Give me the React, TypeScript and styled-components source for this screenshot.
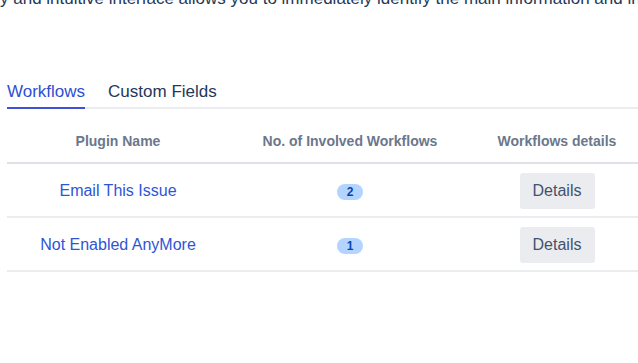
import React, { useState } from 'react';
import styled, { createGlobalStyle } from 'styled-components';

const GlobalStyle = createGlobalStyle`
  html, body {
    margin: 0;
    padding: 0;
    background: #ffffff;
    overflow: hidden;
  }
  body {
    font-family: 'Liberation Sans', Arial, sans-serif;
    color: #172b4d;
  }
`;

const Intro = styled.p`
  margin: -11px 0 0 0;
  font-size: 17px;
  line-height: 20px;
  color: #253858;
  white-space: nowrap;
  overflow: hidden;
`;

const Section = styled.div`
  padding: 69px 0 0 7px;
`;

const TabList = styled.div`
  display: flex;
  gap: 23px;
  border-bottom: 2px solid #ebecf0;
`;

const Tab = styled.button<{ active?: boolean }>`
  position: relative;
  border: 0;
  background: none;
  padding: 4px 0 5px;
  font-family: inherit;
  font-size: 17px;
  line-height: 20px;
  color: ${(p) => (p.active ? '#2e4fd3' : '#253858')};
  cursor: pointer;

  &::after {
    content: '';
    position: absolute;
    left: 0;
    right: 0;
    bottom: -2px;
    height: 2px;
    background: ${(p) => (p.active ? '#3f51d6' : 'transparent')};
  }
`;

const Table = styled.table`
  margin-top: 10px;
  width: 636px;
  border-collapse: collapse;
  table-layout: fixed;
`;

const HeadCell = styled.th<{ w: number }>`
  width: ${(p) => p.w}px;
  height: 43px;
  padding: 0;
  font-size: 14px;
  font-weight: 700;
  color: #6b778c;
  text-align: center;
  border-bottom: 2px solid #dfe1e6;
`;

const Row = styled.tr`
  border-bottom: 2px solid #ebecf0;
`;

const Cell = styled.td`
  height: 50px;
  padding: 2px 0 0;
  text-align: center;
  vertical-align: middle;
`;

const PluginLink = styled.a`
  font-size: 16px;
  color: #2e55d6;
  text-decoration: none;
  cursor: pointer;
`;

const Badge = styled.span`
  display: inline-block;
  min-width: 26px;
  height: 16px;
  line-height: 16px;
  border-radius: 8px;
  background: #b3d4ff;
  color: #0747a6;
  font-size: 12px;
  font-weight: 700;
  text-align: center;
`;

const DetailsButton = styled.button`
  width: 75px;
  height: 36px;
  border: 0;
  border-radius: 3px;
  background: #ebecf0;
  color: #42526e;
  font-family: inherit;
  font-size: 16px;
  cursor: pointer;
`;

const plugins = [
  { name: 'Email This Issue', count: 2 },
  { name: 'Not Enabled AnyMore', count: 1 },
];

export default function App() {
  const [tab, setTab] = useState('workflows');
  return (
    <>
      <GlobalStyle />
      <Intro>
        y and intuitive interface allows you to immediately identify the main information and in
      </Intro>
      <Section>
        <TabList>
          <Tab active={tab === 'workflows'} onClick={() => setTab('workflows')}>
            Workflows
          </Tab>
          <Tab active={tab === 'fields'} onClick={() => setTab('fields')}>
            Custom Fields
          </Tab>
        </TabList>
        <Table>
          <thead>
            <tr>
              <HeadCell w={222}>Plugin Name</HeadCell>
              <HeadCell w={242}>No. of Involved Workflows</HeadCell>
              <HeadCell w={172}>Workflows details</HeadCell>
            </tr>
          </thead>
          <tbody>
            {plugins.map((item) => (
              <Row key={item.name}>
                <Cell>
                  <PluginLink>{item.name}</PluginLink>
                </Cell>
                <Cell>
                  <Badge>{item.count}</Badge>
                </Cell>
                <Cell>
                  <DetailsButton>Details</DetailsButton>
                </Cell>
              </Row>
            ))}
          </tbody>
        </Table>
      </Section>
    </>
  );
}
